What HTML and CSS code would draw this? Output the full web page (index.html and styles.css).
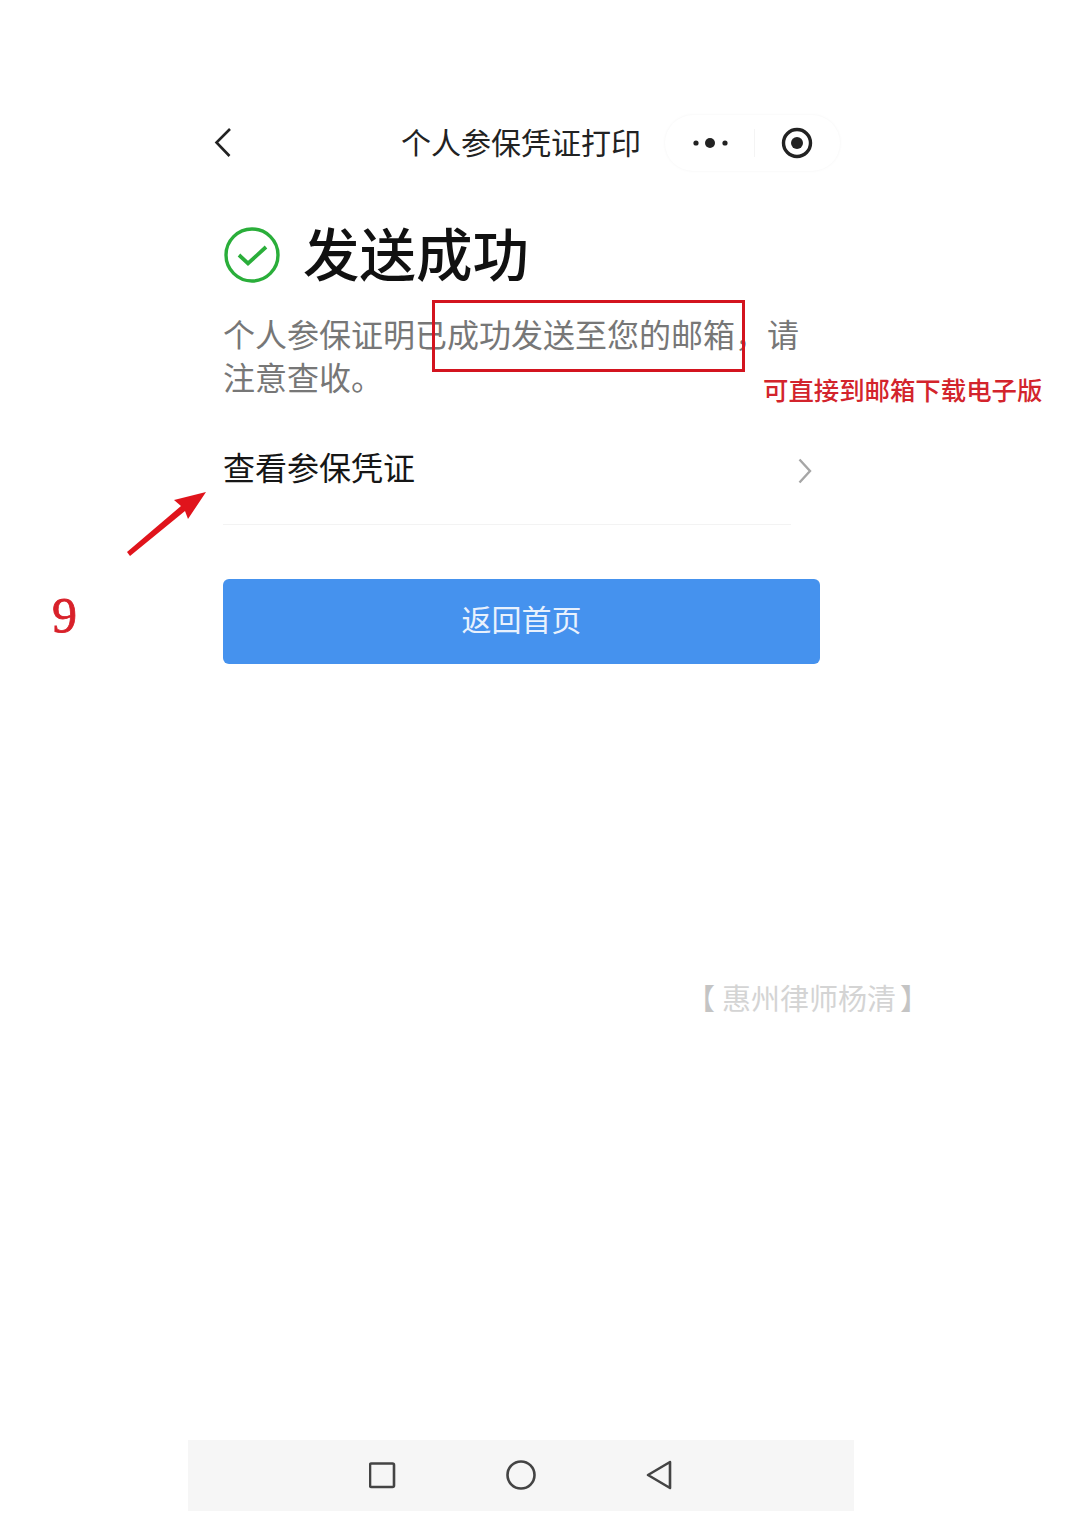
FILE: index.html
```html
<!DOCTYPE html>
<html lang="zh-CN">
  <head>
    <meta charset="UTF-8" />
    <meta name="viewport" content="width=device-width, initial-scale=1.0" />
    <title>个人参保凭证打印</title>
    <link rel="stylesheet" href="styles.css">
  </head>
  <body>
    <div class="page">
      <div class="phone">
        <header class="navbar">
          <svg class="nav-back" width="20" height="34" viewBox="0 0 20 34">
            <path d="M17 3 L3.5 16.5 L16.5 30" fill="none" stroke="#222" stroke-width="2.6" />
          </svg>
          <div class="nav-title">个人参保凭证打印</div>
          <div class="capsule">
            <svg class="capsule-more" width="38" height="14" viewBox="0 0 38 14">
              <circle cx="4" cy="7" r="2.6" fill="#222" />
              <circle cx="18" cy="7" r="5" fill="#222" />
              <circle cx="33" cy="7" r="2.6" fill="#222" />
            </svg>
            <span class="capsule-line"></span>
            <svg class="capsule-close" width="32" height="32" viewBox="0 0 32 32">
              <circle cx="16" cy="16" r="13.5" fill="none" stroke="#222" stroke-width="3.4" />
              <circle cx="16" cy="16" r="6" fill="#222" />
            </svg>
          </div>
        </header>

        <main class="content">
          <div class="result-head">
            <svg class="result-icon" width="58" height="58" viewBox="0 0 58 58">
              <circle cx="29" cy="29" r="26" fill="none" stroke="#2aae3a" stroke-width="3.4" />
              <path d="M16 29 L25 37.5 L43 21" fill="none" stroke="#2aae3a" stroke-width="3.8" />
            </svg>
            <h1 class="result-title">发送成功</h1>
          </div>
          <p class="result-text">
            <span class="result-line">个人参保证明已成功发送至您的邮箱，请</span>
            <span class="result-line">注意查收。</span>
          </p>

          <div class="cert-row">
            <span class="cert-label">查看参保凭证</span>
            <svg class="cert-arrow" width="16" height="28" viewBox="0 0 16 28">
              <path d="M2.5 2.5 L13 14 L2.5 25.5" fill="none" stroke="#a6a6a6" stroke-width="2.4" />
            </svg>
          </div>

          <button class="home-button">返回首页</button>
        </main>

        <nav class="softkeys">
          <svg width="28" height="28" viewBox="0 0 28 28">
            <rect x="1" y="2.5" width="24" height="23.5" rx="1.5" fill="none" stroke="#444" stroke-width="2.6" />
          </svg>
          <svg width="32" height="32" viewBox="0 0 32 32">
            <circle cx="16" cy="16" r="13.5" fill="none" stroke="#444" stroke-width="2.6" />
          </svg>
          <svg width="28" height="32" viewBox="0 0 28 32">
            <path d="M25 3 L3 16 L25 29 Z" fill="none" stroke="#444" stroke-width="2.6" stroke-linejoin="round" />
          </svg>
        </nav>
      </div>

      <!-- annotations drawn over the screenshot -->
      <div class="mark-box"></div>
      <div class="mark-note">可直接到邮箱下载电子版</div>
      <svg class="mark-arrow" width="90" height="72" viewBox="0 0 90 72">
        <path d="M2 64 L56 18 L49 12 L81 4 L63 31 L60 23 L5 68 Z" fill="#e0141c" />
      </svg>
      <div class="mark-num">9</div>
      <div class="watermark"><span class="wm-open">【</span>惠州律师杨清<span class="wm-close">】</span></div>
    </div>
  </body>
</html>
```

FILE: styles.css
```css
* {
  margin: 0;
  padding: 0;
  box-sizing: border-box;
}

body {
  font-family: "Liberation Sans", "Noto Sans CJK SC", sans-serif;
  background: #ffffff;
  color: #111111;
}

.page {
  position: relative;
  width: 1080px;
  height: 1530px;
  overflow: hidden;
}

.phone {
  width: 666px;
  height: 1511px;
  margin-left: 188px;
  display: flex;
  flex-direction: column;
}

.navbar {
  position: relative;
  height: 56px;
  margin-top: 115px;
  display: flex;
  align-items: center;
  justify-content: center;
}

.nav-back {
  position: absolute;
  left: 25px;
  top: 11px;
}

.nav-title {
  font-size: 30px;
  color: #222222;
  margin-top: -4px;
}

.capsule {
  position: absolute;
  left: 477px;
  top: 0;
  width: 175px;
  height: 56px;
  border-radius: 28px;
  box-shadow: 0 0 3px rgba(0, 0, 0, 0.05);
  display: flex;
  align-items: center;
  padding-left: 27px;
}

.capsule-line {
  width: 1px;
  height: 28px;
  margin-left: 24px;
  background: #f4f4f4;
}

.capsule-close {
  margin-left: 26px;
}

.content {
  padding: 0 34px 0 35px;
}

.result-head {
  display: flex;
  align-items: center;
  height: 70px;
  margin-top: 49px;
}

.result-title {
  font-size: 56.5px;
  font-weight: 500;
  line-height: 70px;
  margin-top: 4px;
  margin-left: 22px;
  color: #111111;
}

.result-text {
  margin-top: 25px;
  font-size: 32px;
  line-height: 43px;
  color: #777777;
}

.result-line {
  display: block;
  width: fit-content;
}

.cert-row {
  display: flex;
  align-items: center;
  justify-content: space-between;
  width: 568px;
  height: 121px;
  margin-top: 3px;
  padding-top: 3px;
  border-bottom: 1px solid #f3f3f3;
}

.cert-label {
  font-size: 32px;
  color: #161616;
}

.cert-arrow {
  margin-right: -22px;
  margin-top: 10px;
}

.home-button {
  display: block;
  width: 597px;
  height: 85px;
  margin-top: 54px;
  padding-bottom: 8px;
  border: none;
  border-radius: 6px;
  background: #4592ee;
  color: #e8f1fd;
  font-family: inherit;
  font-size: 30px;
}

.softkeys {
  height: 71px;
  margin-top: auto;
  padding-bottom: 2px;
  background: #f6f6f6;
  display: flex;
  align-items: center;
  justify-content: center;
  gap: 108px;
}

.mark-box {
  position: absolute;
  left: 432px;
  top: 300px;
  width: 313px;
  height: 72px;
  border: 3px solid #d3141f;
}

.mark-note {
  position: absolute;
  left: 763px;
  top: 373px;
  font-family: "Liberation Serif", "Noto Sans CJK SC", serif;
  font-size: 25.4px;
  font-weight: 500;
  line-height: 36px;
  color: #d3242c;
}

.mark-arrow {
  position: absolute;
  left: 125px;
  top: 488px;
}

.mark-num {
  position: absolute;
  left: 52px;
  top: 585px;
  font-family: "Liberation Serif", serif;
  font-size: 50px;
  line-height: 60px;
  color: #d8212a;
  -webkit-text-stroke: 0.8px #d8212a;
}

.watermark {
  position: absolute;
  left: 686px;
  top: 980px;
  font-size: 29px;
  line-height: 40px;
  color: #d4d4d4;
}

.wm-open {
  margin-right: 7px;
  color: #c4c4c4;
}

.wm-close {
  margin-left: 4px;
  color: #c4c4c4;
}
```
